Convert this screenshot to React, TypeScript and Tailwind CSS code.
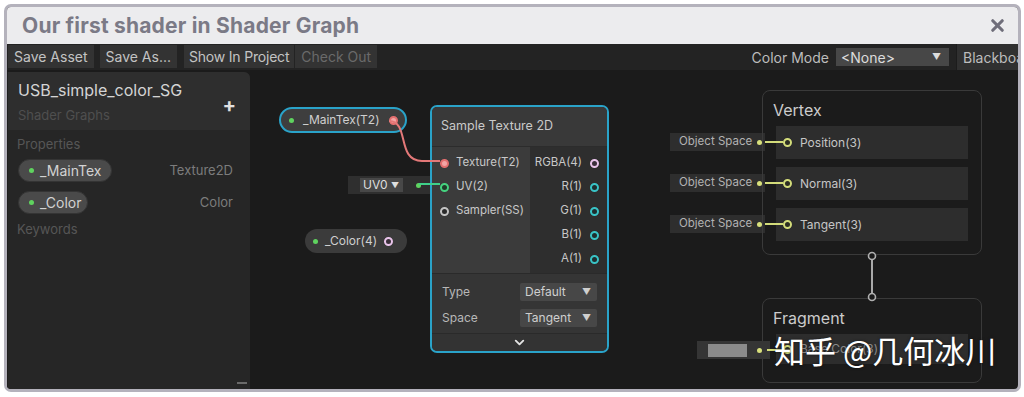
import React from "react";
import { X, ChevronDown } from "lucide-react";

const Ring = ({ cls }: { cls: string }) => (
  <span className={"inline-block w-[9px] h-[9px] rounded-full border-2 shrink-0 " + cls} />
);

const Dot = ({ cls }: { cls: string }) => (
  <span className={"inline-block w-[5px] h-[5px] rounded-full shrink-0 " + cls} />
);

const Dropdown = ({ label, w }: { label: string; w: string }) => (
  <div className={"h-[18px] bg-[#474747] rounded-[2px] flex items-center justify-between pl-[5px] pr-[6px] text-[12px] text-[#cfcfcf] " + w}>
    <span>{label}</span>
    <span className="text-[9px] text-[#cfcfcf]">▼</span>
  </div>
);

function Blackboard() {
  return (
    <div className="w-[243px] mt-[2px] bg-[#262626] rounded-tr-[6px] border-l border-[#1e1e1e] flex flex-col relative">
      <div className="h-[58px] bg-[#2e2e2e] rounded-tr-[6px] pl-[10px] pr-[14px] pt-[8px] flex justify-between">
        <div className="flex flex-col">
          <span className="text-[16px] leading-[20px] text-[#d4d4d4]">USB_simple_color_SG</span>
          <span className="text-[13px] leading-[18px] mt-[6px] text-[#4f4f4f]">Shader Graphs</span>
        </div>
        <span className="text-[20px] leading-[20px] text-[#e0e0e0] mt-[15px] font-bold">+</span>
      </div>
      <div className="px-[9px] pt-[5px] flex flex-col">
        <span className="text-[13px] leading-[18px] text-[#565656]">Properties</span>
        <div className="flex items-center justify-between mt-[6px] pl-[1px] pr-[8px]">
          <div className="h-[23px] w-[94px] rounded-full bg-[#4a4a4a] border border-[#343434] flex items-center pl-[10px] gap-[6px]">
            <Dot cls="bg-[#5fd35f]" />
            <span className="text-[14px] text-[#d2d2d2]">_MainTex</span>
          </div>
          <span className="text-[13px] text-[#7c7c7c]">Texture2D</span>
        </div>
        <div className="flex items-center justify-between mt-[9px] pl-[1px] pr-[8px]">
          <div className="h-[23px] w-[70px] rounded-full bg-[#4a4a4a] border border-[#343434] flex items-center pl-[10px] gap-[6px]">
            <Dot cls="bg-[#5fd35f]" />
            <span className="text-[14px] text-[#d2d2d2]">_Color</span>
          </div>
          <span className="text-[13px] text-[#7c7c7c]">Color</span>
        </div>
        <span className="text-[13px] leading-[18px] text-[#565656] mt-[6px]">Keywords</span>
      </div>
      <span className="absolute right-[3px] bottom-[5px] w-[10px] h-[2px] bg-[#6a6a6a]" />
    </div>
  );
}

function SampleTexture() {
  const outs = [
    { t: "RGBA(4)", c: "border-[#e9c4ea] bg-[#3a2f3a]" },
    { t: "R(1)", c: "border-[#39c3c6] bg-[#1f2d2e]" },
    { t: "G(1)", c: "border-[#39c3c6] bg-[#1f2d2e]" },
    { t: "B(1)", c: "border-[#39c3c6] bg-[#1f2d2e]" },
    { t: "A(1)", c: "border-[#39c3c6] bg-[#1f2d2e]" },
  ];
  return (
    <div className="absolute left-[180px] top-[35px] w-[179px] h-[248px] border-2 border-[#2aa3c9] rounded-[7px] overflow-hidden bg-[#333333] flex flex-col">
      <div className="h-[39px] shrink-0 bg-[#393939] flex items-center pl-[9px] text-[12.5px] text-[#c9c9c9]">Sample Texture 2D</div>
      <div className="h-[127px] shrink-0 flex border-t border-[#2c2c2c]">
        <div className="w-[98px] bg-[#3b3b3b] pt-[4px] flex flex-col">
          <div className="h-[24px] flex items-center pl-[8px] gap-[7px] text-[11.5px] text-[#c8c8c8]">
            <Ring cls="border-[#e36f6f] bg-[#f3a5a5]" />
            <span>Texture(T2)</span>
          </div>
          <div className="h-[24px] flex items-center pl-[8px] gap-[7px] text-[11.5px] text-[#c8c8c8]">
            <Ring cls="border-[#45d27f] bg-[#213a2a]" />
            <span>UV(2)</span>
          </div>
          <div className="h-[24px] flex items-center pl-[8px] gap-[7px] text-[11.5px] text-[#c8c8c8]">
            <Ring cls="border-[#c4c4c4] bg-[#2a2a2a]" />
            <span>Sampler(SS)</span>
          </div>
        </div>
        <div className="flex-1 bg-[#2e2e2e] pt-[4px] flex flex-col">
          {outs.map((o) => (
            <div key={o.t} className="h-[24px] flex items-center justify-end pr-[8px] gap-[8px] text-[11.5px] text-[#c8c8c8]">
              <span>{o.t}</span>
              <Ring cls={o.c} />
            </div>
          ))}
        </div>
      </div>
      <div className="h-[60px] shrink-0 bg-[#353535] border-t border-[#2a2a2a] pt-[5px] pl-[10px] pr-[10px] flex flex-col">
        <div className="h-[26px] flex items-center justify-between text-[12px] text-[#b8b8b8]">
          <span>Type</span>
          <Dropdown label="Default" w="w-[77px]" />
        </div>
        <div className="h-[26px] flex items-center justify-between text-[12px] text-[#b8b8b8]">
          <span>Space</span>
          <Dropdown label="Tangent" w="w-[77px]" />
        </div>
      </div>
      <div className="flex-1 bg-[#333333] border-t border-[#2a2a2a] flex items-center justify-center">
        <ChevronDown size={15} strokeWidth={3} color="#e2e2e2" />
      </div>
    </div>
  );
}

function MasterBlock({ title, rows, top, h, dim }: { title: string; rows: string[]; top: string; h: string; dim?: boolean }) {
  return (
    <div className={"absolute left-[512px] w-[220px] border border-[#3a3a3a] rounded-[8px] px-[13px] flex flex-col " + top + " " + h}>
      <div className="pt-[7px] h-[35px] -ml-[3px] text-[16px] leading-[24px] text-[#cccccc]">{title}</div>
      <div className="flex flex-col gap-[8px]">
        {rows.map((r) => (
          <div key={r} className={"bg-[#2d2d2d] flex items-center pl-[7px] gap-[8px] text-[12px] " + (dim ? "h-[30px] text-[#8a8a8a]" : "h-[33px] text-[#c6c6c6]")}>
            <Ring cls="border-[#d3dc7a] bg-[#2b2d22]" />
            <span>{r}</span>
          </div>
        ))}
      </div>
    </div>
  );
}

function ObjLabel({ top }: { top: string }) {
  return (
    <div className={"absolute left-[420px] w-[95px] h-[18px] bg-[#2e2e2e] flex items-center justify-between pl-[9px] pr-[3px] text-[11.5px] text-[#b2b2b2] " + top}>
      <span>Object Space</span>
      <Dot cls="bg-[#d8e07c] w-[4px] h-[4px]" />
    </div>
  );
}

function Graph() {
  return (
    <div className="flex-1 relative">
      {/* _MainTex property node */}
      <div className="absolute left-[29px] top-[37px] w-[128px] h-[26px] rounded-full border-2 border-[#2aa3c9] bg-[#3e3e3e] flex items-center pl-[8px] pr-[13px] gap-[9px]">
        <Dot cls="bg-[#5fd35f]" />
        <span className="text-[12px] text-[#cfcfcf]">_MainTex(T2)</span>
        <Ring cls="ml-auto border-[#e36f6f] bg-[#f3a5a5]" />
      </div>

      {/* UV0 */}
      <div className="absolute left-[98px] top-[106px] w-[82px] h-[18px] bg-[#2f2f2f] flex items-center pl-[12px] pr-[9px] justify-between">
        <div className="h-[14px] w-[43px] bg-[#484848] flex items-center justify-between pl-[3px] pr-[4px] text-[12px] text-[#dedede]">
          <span>UV0</span>
          <span className="text-[8px]">▼</span>
        </div>
        <Dot cls="bg-[#5fd35f] w-[4px] h-[4px]" />
      </div>

      {/* _Color property node */}
      <div className="absolute left-[55px] top-[159px] w-[102px] h-[24px] rounded-full bg-[#3b3b3b] flex items-center pl-[8px] pr-[16px] gap-[7px]">
        <Dot cls="bg-[#5fd35f]" />
        <span className="text-[12px] text-[#cfcfcf]">_Color(4)</span>
        <Ring cls="ml-auto border-[#e9c4ea] bg-[#3a2f3a]" />
      </div>

      <SampleTexture />

      <ObjLabel top="top-[63px]" />
      <ObjLabel top="top-[104px]" />
      <ObjLabel top="top-[145px]" />

      <MasterBlock title="Vertex" rows={["Position(3)", "Normal(3)", "Tangent(3)"]} top="top-[20px]" h="h-[165px]" />
      <MasterBlock title="Fragment" rows={["Base Color(3)"]} top="top-[228px]" h="h-[85px]" dim />

      {/* Base color swatch */}
      <div className="absolute left-[447px] top-[271px] w-[73px] h-[18px] bg-[#353535] flex items-center justify-between pl-[11px] pr-[8px]">
        <span className="w-[39px] h-[13px] bg-[#8b8b8b]" />
        <Dot cls="bg-[#d8e07c] w-[4px] h-[4px]" />
      </div>

      <svg className="absolute inset-0 pointer-events-none" width="768" height="319">
        <path d="M139 51 C 160 51, 146 91, 172 91 L 190 91" stroke="#e37878" strokeWidth="2" fill="none" />
        <line x1="169" y1="114" x2="190" y2="114" stroke="#3fd08a" strokeWidth="2" />
        <line x1="515" y1="72" x2="533" y2="72" stroke="#d3dc7a" strokeWidth="2" />
        <line x1="515" y1="113" x2="533" y2="113" stroke="#d3dc7a" strokeWidth="2" />
        <line x1="515" y1="154" x2="533" y2="154" stroke="#d3dc7a" strokeWidth="2" />
        <line x1="517" y1="280" x2="533" y2="280" stroke="#d3dc7a" strokeWidth="2" />
        <line x1="622" y1="190" x2="622" y2="223" stroke="#a9a9a9" strokeWidth="2" />
        <circle cx="622" cy="186" r="3.5" stroke="#b0b0b0" strokeWidth="1.6" fill="#1b1b1b" />
        <circle cx="622" cy="227" r="3.5" stroke="#b0b0b0" strokeWidth="1.6" fill="#1b1b1b" />
      </svg>

      <div
        className="absolute left-[524px] top-[259px] text-[31px] leading-[42px] text-white whitespace-nowrap [text-shadow:0_0_3px_rgba(0,0,0,0.5)]"
        style={{ fontFamily: '"Noto Sans CJK SC", "Noto Sans", sans-serif' }}
      >
        知乎 @几何冰川
      </div>
    </div>
  );
}

export default function App() {
  return (
    <div className="w-[1024px] h-[397px] bg-white pt-[4px] pl-[4px]" style={{ fontFamily: 'Inter, "Noto Sans", sans-serif' }}>
      <div className="w-[1017px] h-[388px] border-[3px] border-[#b4b2bc] rounded-[7px] overflow-hidden flex flex-col bg-[#1b1b1b]">
        <div className="h-[37px] shrink-0 bg-[#ececee] flex items-center justify-between pl-[15px] pr-[11px]">
          <span className="text-[21px] font-bold text-[#7b7a86] tracking-[0.2px]">Our first shader in Shader Graph</span>
          <X size={19} strokeWidth={4} color="#6f6e7a" />
        </div>
        <div className="h-[26px] shrink-0 bg-[#232323] flex items-center text-[14px] text-[#c3c3c3]">
          <div className="flex h-full items-stretch pt-[1px] pb-[2px]">
            <div className="ml-[1px] bg-[#333333] px-[6px] flex items-center">Save Asset</div>
            <div className="ml-[6px] bg-[#333333] px-[6px] flex items-center">Save As...</div>
            <div className="ml-[7px] bg-[#333333] px-[5px] flex items-center tracking-[-0.2px]">Show In Project</div>
            <div className="ml-[1px] bg-[#333333] px-[6px] flex items-center text-[#6a6a6a]">Check Out</div>
          </div>
          <div className="flex-1" />
          <span className="text-[#bdbdbd]">Color Mode</span>
          <div className="ml-[7px] w-[113px] h-[18px] bg-[#474747] flex items-center justify-between pl-[5px] pr-[8px] text-[#dcdcdc]">
            <span>&lt;None&gt;</span>
            <span className="text-[9px]">▼</span>
          </div>
          <div className="ml-[7px] h-full w-[62px] border-l border-[#1c1c1c] bg-[#303030] pl-[6px] flex items-center overflow-hidden whitespace-nowrap text-[#bdbdbd]">Blackboa</div>
        </div>
        <div className="flex-1 flex">
          <Blackboard />
          <Graph />
        </div>
      </div>
    </div>
  );
}
